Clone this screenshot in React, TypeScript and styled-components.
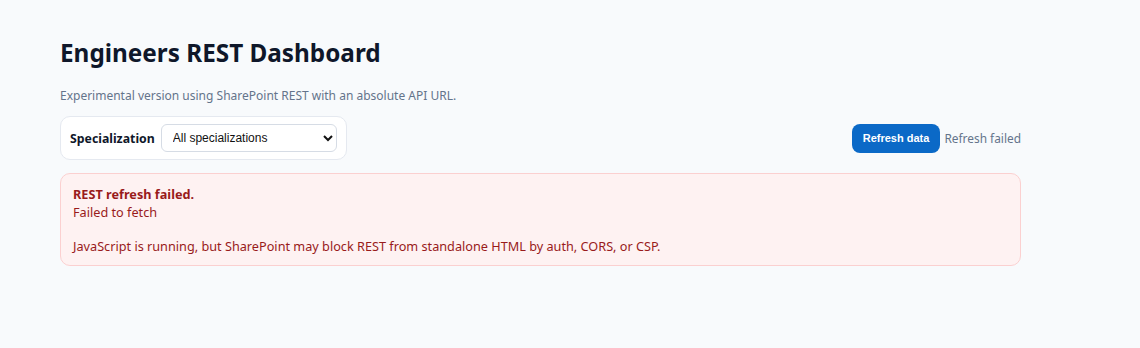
import React from 'react'
import styled, { createGlobalStyle } from 'styled-components'

const Global = createGlobalStyle`
  html, body {
    margin: 0;
    padding: 0;
    background: #f8fafc;
    font-family: "Noto Sans", "Open Sans", sans-serif;
    color: #0f172a;
  }
`

const Page = styled.div`
  width: 961px;
  padding: 36px 0 0 60px;
`

const Title = styled.h1`
  margin: 0;
  font-size: 24.3px;
  font-weight: 700;
  line-height: 34px;
  color: #0f172a;
`

const Subtitle = styled.p`
  margin: 17px 0 0;
  font-size: 12px;
  line-height: 18px;
  color: #64748b;
`

const Toolbar = styled.div`
  display: flex;
  align-items: center;
  justify-content: space-between;
  margin-top: 11px;
`

const FilterCard = styled.div`
  display: flex;
  align-items: center;
  gap: 6px;
  height: 44px;
  padding: 0 9px;
  box-sizing: border-box;
  background: #ffffff;
  border: 1px solid #e5e9f0;
  border-radius: 10px;
`

const Label = styled.label`
  font-size: 12.3px;
  font-weight: 700;
  color: #0f172a;
`

const Select = styled.select`
  width: 176px;
  height: 28px;
  padding: 0 7px;
  font-family: "Liberation Sans", Arial, sans-serif;
  font-size: 12px;
  color: #111;
  background: #ffffff;
  border: 1px solid #d6dce5;
  border-radius: 6px;
`

const Actions = styled.div`
  display: flex;
  align-items: center;
  gap: 4px;
`

const Button = styled.button`
  height: 29px;
  padding: 0 11px;
  font-family: "Liberation Sans", Arial, sans-serif;
  font-size: 11px;
  font-weight: 700;
  color: #ffffff;
  background: #0b69c7;
  border: none;
  border-radius: 8px;
`

const Status = styled.span`
  font-size: 11.9px;
  color: #64748b;
`

const ErrorBox = styled.div`
  margin-top: 13px;
  padding: 11px 12px 10px;
  background: #fef2f2;
  border: 1px solid #fbd0d0;
  border-radius: 10px;
  color: #991b1b;
  font-size: 12.7px;
  line-height: 18px;
`

const ErrorTitle = styled.div`
  font-weight: 700;
`

const Gap = styled.div`
  height: 16px;
`

export default function App() {
  return (
    <>
      <Global />
      <Page>
        <Title>Engineers REST Dashboard</Title>
        <Subtitle>Experimental version using SharePoint REST with an absolute API URL.</Subtitle>
        <Toolbar>
          <FilterCard>
            <Label htmlFor="spec">Specialization</Label>
            <Select id="spec">
              <option>All specializations</option>
            </Select>
          </FilterCard>
          <Actions>
            <Button>Refresh data</Button>
            <Status>Refresh failed</Status>
          </Actions>
        </Toolbar>
        <ErrorBox>
          <ErrorTitle>REST refresh failed.</ErrorTitle>
          <div>Failed to fetch</div>
          <Gap />
          <div>JavaScript is running, but SharePoint may block REST from standalone HTML by auth, CORS, or CSP.</div>
        </ErrorBox>
      </Page>
    </>
  )
}
